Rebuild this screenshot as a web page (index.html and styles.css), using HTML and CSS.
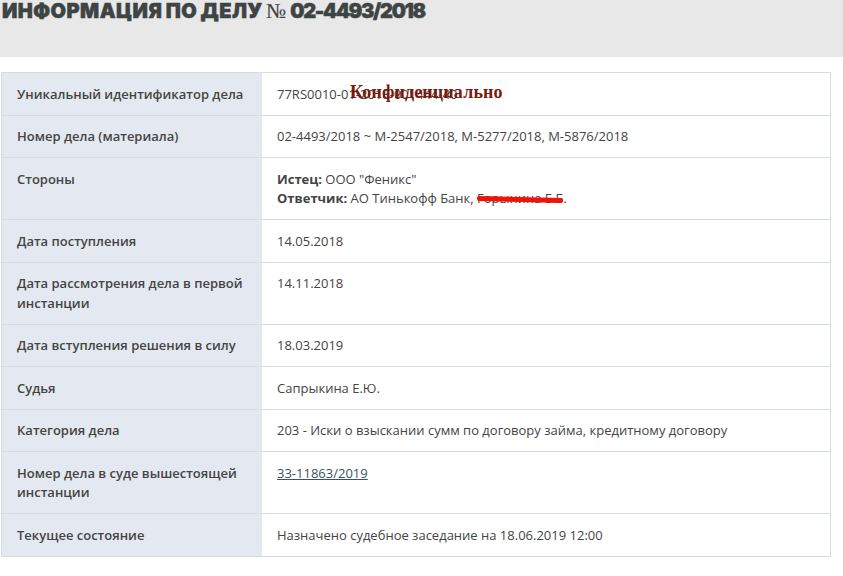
FILE: index.html
```html
<!DOCTYPE html>
<html lang="ru">
<head>
<meta charset="utf-8">
<title>Информация по делу № 02-4493/2018</title>
<link rel="stylesheet" href="styles.css">
</head>
<body>
<header class="banner">
  <h1 class="title">ИНФОРМАЦИЯ ПО ДЕЛУ <span class="num">№</span> <span class="digits">02-4493/2018</span></h1>
</header>
<main class="content">
  <dl class="info">
    <dt>Уникальный идентификатор дела</dt><dd><span class="uid">77RS0010-01-2018-001444-40<span class="stamp">Конфиденциально</span></span></dd>
    <dt>Номер дела (материала)</dt><dd>02-4493/2018 ~ М-2547/2018, М-5277/2018, М-5876/2018</dd>
    <dt>Стороны</dt><dd><b>Истец:</b> ООО "Феникс"<br><b>Ответчик:</b> АО Тинькофф Банк, <span class="redacted">Горынина Е.Б</span>.</dd>
    <dt>Дата поступления</dt><dd>14.05.2018</dd>
    <dt>Дата рассмотрения дела в первой инстанции</dt><dd>14.11.2018</dd>
    <dt>Дата вступления решения в силу</dt><dd>18.03.2019</dd>
    <dt>Судья</dt><dd>Сапрыкина Е.Ю.</dd>
    <dt>Категория дела</dt><dd>203 - Иски о взыскании сумм по договору займа, кредитному договору</dd>
    <dt>Номер дела в суде вышестоящей инстанции</dt><dd><a class="link" href="#">33-11863/2019</a></dd>
    <dt>Текущее состояние</dt><dd>Назначено судебное заседание на 18.06.2019 12:00</dd>
  </dl>
</main>
</body>
</html>
```
FILE: styles.css
```css
html, body { margin: 0; padding: 0; background: #fff; }
body { font-family: "Open Sans", "Noto Sans", sans-serif; font-size: 13px; line-height: 1.5; color: #444; overflow: hidden; }
.banner { background: #e8e8e8; height: 57px; padding-left: 2px; box-sizing: border-box; }
.title { margin: 0; font-family: "Inter", sans-serif; font-weight: 900; font-size: 20px; line-height: 22px; letter-spacing: 0.45px; word-spacing: -1px; color: #3e4444; -webkit-text-stroke: 0.5px #3e4444; }
.num { font-family: "Liberation Serif", serif; font-weight: 400; font-size: 21px; -webkit-text-stroke: 0.2px #3e4444; }
.digits { letter-spacing: -1.25px; }
.content { padding: 15px 12px 0 1px; }
.info { margin: 0; display: grid; grid-template-columns: 260px 1fr; width: 830px; box-sizing: border-box; border: 1px solid #d5dce4; border-bottom-width: 0; }
.info dt, .info dd { margin: 0; padding: 11.5px 15px 10.5px; border-bottom: 1px solid #d5dce4; }
.info dt { background: #e4e9f1; font-weight: 600; color: #444; }
.info dd { background: #fff; color: #444; }
.info dd b { font-weight: 700; }
.uid { position: relative; display: inline-block; }
.stamp { position: absolute; left: 73px; top: -3px; font-family: "Liberation Serif", serif; font-weight: 700; font-size: 18px; line-height: 20px; letter-spacing: 0.13px; color: #7a1a0a; white-space: nowrap; }
.redacted { position: relative; display: inline-block; }
.redacted::after { content: ""; position: absolute; left: 0; right: 0; top: 8px; height: 5px; border-radius: 2px; background: #f01408; transform: rotate(1.5deg); }
.link { color: #3b5266; text-decoration: underline; }
```
